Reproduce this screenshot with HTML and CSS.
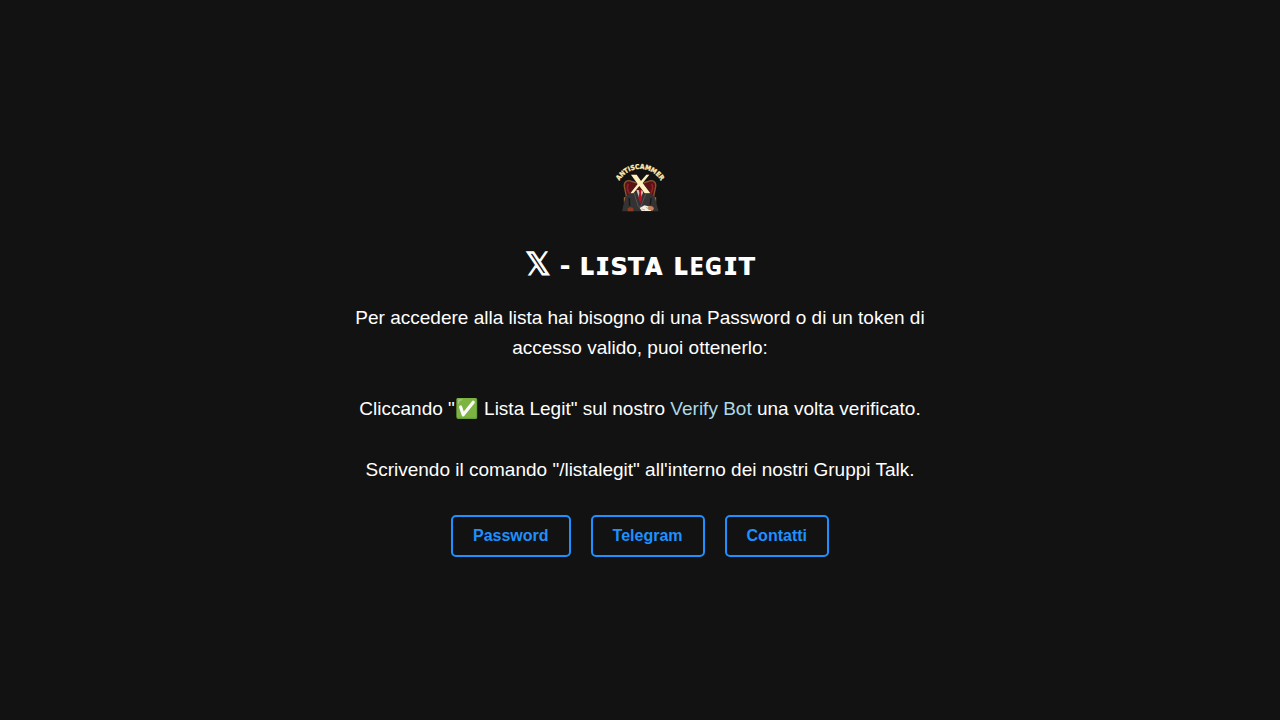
FILE: index.html
```html
<!DOCTYPE html>
<html lang="it">
<head>
    <meta charset="UTF-8">
    <meta name="viewport" content="width=device-width, initial-scale=1.0">
    <title>𝕏 - ʟɪꜱᴛᴀ ʟᴇɢɪᴛ</title>
    <link rel="stylesheet" href="styles.css">
</head>
<body>
    <main class="container">
        <!-- Logo -->
        <svg class="logo" viewBox="0 3 150 150" role="img" aria-label="Antiscammer">
            <defs>
                <path id="arc" d="M10 62 A72 72 0 0 1 140 62"/>
            </defs>
            <!-- Chair -->
            <path d="M50 58 C36 52 26 60 28 74 L34 102 L28 132 L122 132 L116 102 L122 74 C124 60 114 52 100 58 L75 66 Z" fill="#5c1118" stroke="#86562a" stroke-width="4"/>
            <path d="M40 66 C34 74 38 88 44 96 M110 66 C116 74 112 88 106 96" fill="none" stroke="#8d2229" stroke-width="5"/>
            <path d="M29 106 v16 M121 106 v16" stroke="#a06a32" stroke-width="5"/>
            <!-- Suit -->
            <path d="M56 90 L38 98 Q30 104 27 122 L21 148 L131 148 L123 120 Q120 103 112 98 L96 90 Z" fill="#343233"/>
            <path d="M43 108 L44 132 M108 108 L106 128" stroke="#191819" stroke-width="4"/>
            <path d="M57 92 L70 134 L76 136 L94 92" fill="none" stroke="#565253" stroke-width="3"/>
            <path d="M64 84 L75 116 L87 84 Z" fill="#cdbdb4"/>
            <path d="M71 84 h9 l-2 8 3 18 -5 14 -6 -14 3 -18 Z" fill="#b30f20"/>
            <!-- Hands and papers -->
            <path d="M38 139 q10 -6 17 0 v9 h-17 Z" fill="#8a3c23"/>
            <path d="M74 138 L88 130 L112 136 L108 147 L80 147 Z" fill="#f5eee2"/>
            <path d="M98 134 q14 -6 19 5 l-4 7 -13 -3 Z" fill="#c98358"/>
            <path d="M80 141 l10 3 M93 136 l8 5" stroke="#a59382" stroke-width="2"/>
            <!-- X mark -->
            <path d="M48 38 H65 L78 57 L94 38 H103 L83 63 L106 94 H89 L73 72 L55 94 H46 L68 66 Z" fill="#fff0bd" stroke="#2b1712" stroke-width="3" paint-order="stroke"/>
            <text class="logo-text"><textPath href="#arc" startOffset="50%">ANTISCAMMER</textPath></text>
        </svg>

        <h1 class="title">𝕏 - <span class="title-name">ʟɪꜱᴛᴀ ʟᴇɢɪᴛ</span></h1>

        <p class="description">
            Per accedere alla lista hai bisogno di una Password o di un token di accesso valido, puoi ottenerlo:
            <br><br>
            Cliccando "✅ Lista Legit" sul nostro <a class="link" href="#">Verify Bot</a> una volta verificato.
            <br><br>
            Scrivendo il comando "/listalegit" all'interno dei nostri Gruppi Talk.
        </p>

        <div class="buttons">
            <button class="btn" type="button">Password</button>
            <button class="btn" type="button">Telegram</button>
            <button class="btn" type="button">Contatti</button>
        </div>
    </main>
</body>
</html>
```

FILE: styles.css
```css
body {
    display: flex;
    align-items: center;
    justify-content: center;
    min-height: 100vh;
    margin: 0;
    background-color: #121212;
    color: #ffffff;
    font-family: "Liberation Sans", Arial, sans-serif;
}
.container {
    display: flex;
    flex-direction: column;
    align-items: center;
    max-width: 600px;
    text-align: center;
}
.logo {
    width: 50px;
    height: 50px;
    overflow: visible;
}
.logo-text {
    font-family: "DejaVu Sans Condensed", "DejaVu Sans", sans-serif;
    font-size: 20px;
    font-weight: bold;
    text-anchor: middle;
    fill: #ffe9b0;
    stroke: #ffe9b0;
    stroke-width: 1px;
}
.title {
    margin: 32px 0 20px;
    font-size: 32px;
    font-weight: bold;
    line-height: 38px;
}
.title-name {
    font-family: "DejaVu Sans Condensed", "DejaVu Sans", sans-serif;
}
.description {
    margin: 0 0 30px;
    font-size: 19px;
    line-height: 1.6;
}
.link {
    color: lightblue;
    text-decoration: none;
}
.buttons {
    display: flex;
    flex-wrap: wrap;
    justify-content: center;
    gap: 20px;
}
.btn {
    padding: 10px 20px;
    border: 2px solid #1e90ff;
    border-radius: 5px;
    background-color: transparent;
    color: #1e90ff;
    font-family: inherit;
    font-size: 16px;
    font-weight: bold;
    cursor: pointer;
    transition: background-color 0.3s, color 0.3s;
}
.btn:hover {
    background-color: #1e90ff;
    color: #ffffff;
}
```
